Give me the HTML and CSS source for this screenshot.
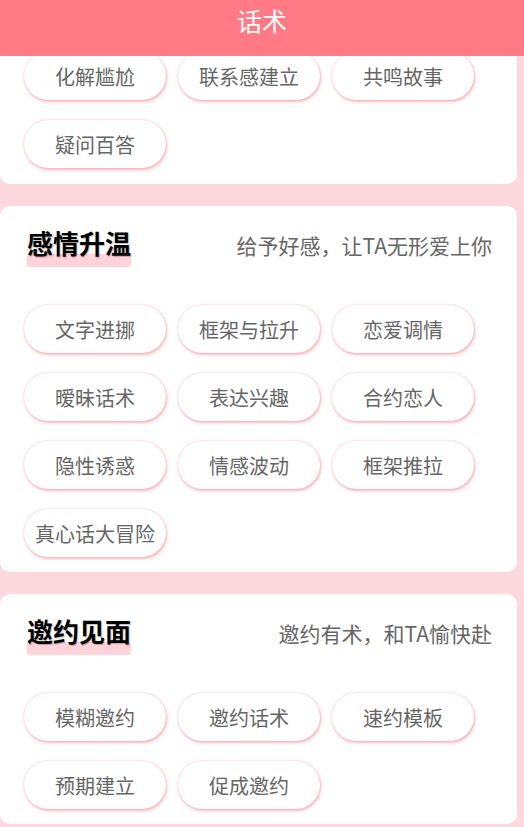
FILE: index.html
```html
<!DOCTYPE html>
<html lang="zh-CN">
<head>
    <meta charset="UTF-8">
    <meta name="viewport" content="width=device-width, initial-scale=1.0">
    <title>话术</title>
    <link rel="stylesheet" href="styles.css">
</head>
<body>

    <div class="header">话术</div>

    <div class="list">
        <!-- first group, scrolled partly under the header -->
        <div class="card card-scrolled">
            <div class="tags">
                <div class="tag">化解尴尬</div>
                <div class="tag">联系感建立</div>
                <div class="tag">共鸣故事</div>
                <div class="tag">疑问百答</div>
            </div>
        </div>

        <div class="card">
            <div class="card-head">
                <span class="card-title">感情升温</span>
                <span class="card-desc">给予好感，让TA无形爱上你</span>
            </div>
            <div class="tags">
                <div class="tag">文字进挪</div>
                <div class="tag">框架与拉升</div>
                <div class="tag">恋爱调情</div>
                <div class="tag">暧昧话术</div>
                <div class="tag">表达兴趣</div>
                <div class="tag">合约恋人</div>
                <div class="tag">隐性诱惑</div>
                <div class="tag">情感波动</div>
                <div class="tag">框架推拉</div>
                <div class="tag">真心话大冒险</div>
            </div>
        </div>

        <div class="card">
            <div class="card-head">
                <span class="card-title">邀约见面</span>
                <span class="card-desc">邀约有术，和TA愉快赴</span>
            </div>
            <div class="tags">
                <div class="tag">模糊邀约</div>
                <div class="tag">邀约话术</div>
                <div class="tag">速约模板</div>
                <div class="tag">预期建立</div>
                <div class="tag">促成邀约</div>
            </div>
        </div>
    </div>

</body>
</html>
```

FILE: styles.css
```css
body {
    margin: 0;
    padding: 0;
    background-color: #fdd8dc;
    font-family: "Noto Sans CJK SC", "Noto Sans", sans-serif;
    overflow: hidden;
    height: 100vh;
}

/* Top bar */
.header {
    position: fixed;
    top: 0;
    left: 0;
    right: 0;
    height: 56px;
    line-height: 40px;
    text-align: center;
    background-color: #ff7a84;
    color: #ffffff;
    font-size: 25px;
    z-index: 10;
}

/* Cards */
.list {
    display: flex;
    flex-direction: column;
    gap: 22px;
}

.card {
    background-color: #ffffff;
    border-radius: 10px;
    margin-right: 7px;
    padding: 0 25px 15px 24px;
}

.card-scrolled {
    border-radius: 0 0 10px 10px;
    padding-top: 52px;
    padding-bottom: 16px;
}

.card-head {
    display: flex;
    justify-content: space-between;
    align-items: flex-start;
    height: 99px;
    box-sizing: border-box;
    padding-top: 22px;
}

.card-title {
    position: relative;
    z-index: 0;
    margin-left: 3px;
    padding-bottom: 9px;
    font-size: 26px;
    line-height: 30px;
    font-weight: bold;
    color: #000000;
    text-shadow: 1px 1px 1px rgba(0, 0, 0, 0.25);
}

/* pink marker under the title */
.card-title::after {
    content: "";
    position: absolute;
    left: 0;
    right: 0;
    bottom: 0;
    height: 13px;
    border-radius: 3px;
    background-color: #ffd3d9;
    z-index: -1;
}

.card-desc {
    margin-top: 2px;
    font-size: 21px;
    line-height: 30px;
    color: #666666;
}

/* Pill buttons */
.tags {
    display: flex;
    flex-wrap: wrap;
    gap: 20px 12px;
}

.tag {
    width: 142px;
    height: 48px;
    box-sizing: border-box;
    border-radius: 24px;
    background-color: #ffffff;
    box-shadow: 1px 2px 3px rgba(245, 120, 130, 0.5), 0 0 2px rgba(245, 130, 140, 0.6);
    display: flex;
    align-items: center;
    justify-content: center;
    font-size: 20px;
    color: #666666;
}
```
